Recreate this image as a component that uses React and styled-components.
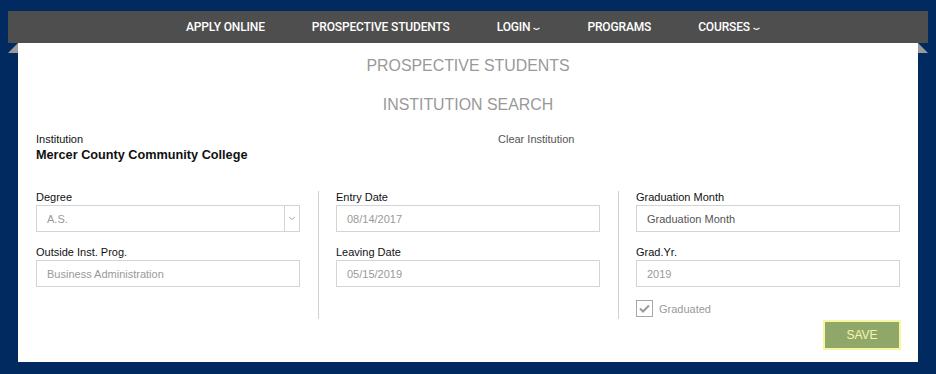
import React from 'react';
import styled, { createGlobalStyle } from 'styled-components';

const GlobalStyle = createGlobalStyle`
  html, body { margin: 0; padding: 0; background: #002a60; }
  body { font-family: 'Liberation Sans', Arial, sans-serif; }
`;

const Page = styled.div`
  width: 936px;
  height: 374px;
  padding: 11px 8px 0;
  box-sizing: border-box;
  background: #002a60;
`;

const Nav = styled.nav`
  position: relative;
  width: 920px;
  height: 32px;
  background: #4e4e4e;
  display: flex;
  justify-content: center;
  align-items: center;
  padding-left: 10px;
  box-sizing: border-box;

  &::before, &::after {
    content: '';
    position: absolute;
    top: 100%;
    width: 0; height: 0;
    border-style: solid;
  }
  &::before {
    left: 0;
    border-width: 10px 10px 0 0;
    border-color: transparent #9a9a9a transparent transparent;
  }
  &::after {
    right: 0;
    border-width: 10px 0 0 10px;
    border-color: transparent transparent transparent #9a9a9a;
  }
`;

const NavItem = styled.a`
  padding: 0 23.5px;
  color: #fff;
  font-family: Roboto, 'Liberation Sans', sans-serif;
  font-weight: 500;
  font-size: 12px;
  letter-spacing: -0.15px;
  text-decoration: none;
  display: flex;
  align-items: center;
  gap: 3px;
  white-space: nowrap;
`;

const Panel = styled.main`
  width: 900px;
  margin: 0 10px;
  background: #fff;
  padding: 12px 18px 12px;
  box-sizing: border-box;
`;

const Title = styled.h2`
  margin: 0 0 18px;
  text-align: center;
  font-weight: normal;
  font-size: 15.9px;
  line-height: 21px;
  color: #999;
`;

const InstRow = styled.div`
  display: flex;
  margin-top: 1px;
`;

const InstBlock = styled.div`
  width: 462px;
`;

const Label = styled.div`
  font-size: 11px;
  line-height: 13px;
  color: ${p => p.muted ? '#555' : '#111'};
  margin-bottom: 1px;
`;

const InstName = styled.div`
  font-weight: bold;
  font-size: 12.7px;
  line-height: 16px;
  color: #111;
`;

const Columns = styled.div`
  display: grid;
  grid-template-columns: 300px 300px 300px;
  margin: 28px -18px 0;
`;

const Column = styled.div`
  padding: 0 18px;
  height: 128px;
  border-left: ${p => p.divided ? '1px solid #d0d0d0' : 'none'};
  padding-left: ${p => p.divided ? '17px' : '18px'};
`;

const Field = styled.div`
  margin-bottom: 14px;
`;

const Box = styled.div`
  height: 27px;
  border: 1px solid #d4d4d4;
  box-sizing: border-box;
  display: flex;
  align-items: center;
  padding-left: 10px;
  font-size: 11px;
  color: ${p => p.dark ? '#555' : '#9a9a9a'};
`;

const SelectArrow = styled.div`
  margin-left: auto;
  width: 14px;
  height: 100%;
  border-left: 1px solid #d4d4d4;
  display: flex;
  align-items: center;
  justify-content: center;
`;

const CheckRow = styled.div`
  display: flex;
  align-items: center;
  gap: 6px;
  margin-top: -1px;
  font-size: 11px;
  color: #9a9a9a;
`;

const CheckBox = styled.div`
  width: 17px;
  height: 17px;
  border: 1px solid #a8a8a8;
  box-sizing: border-box;
  display: flex;
  align-items: center;
  justify-content: center;
`;

const Footer = styled.div`
  display: flex;
  justify-content: flex-end;
  margin: 1px -1px 0 0;
`;

const SaveButton = styled.button`
  width: 78px;
  height: 30px;
  background: #8fa86a;
  border: 2px solid #f6f7a0;
  color: #f6f6a8;
  font-family: 'Liberation Sans', Arial, sans-serif;
  font-size: 12px;
  padding: 0;
`;

const Chevron = ({ color = '#fff', w = 7, h = 4 }) => (
  <svg width={w} height={h} viewBox="0 0 7 4" style={{ marginTop: 3 }}>
    <path d="M0.5 0.8 Q3.5 4 6.5 0.8" fill="none" stroke={color} strokeWidth="1.2" />
  </svg>
);

const navItems = [
  { label: 'APPLY ONLINE' },
  { label: 'PROSPECTIVE STUDENTS' },
  { label: 'LOGIN', menu: true },
  { label: 'PROGRAMS' },
  { label: 'COURSES', menu: true },
];

const App = () => (
  <Page>
    <GlobalStyle />
    <Nav>
      {navItems.map(item => (
        <NavItem key={item.label}>
          {item.label}
          {item.menu && <Chevron />}
        </NavItem>
      ))}
    </Nav>
    <Panel>
      <Title>PROSPECTIVE STUDENTS</Title>
      <Title>INSTITUTION SEARCH</Title>
      <InstRow>
        <InstBlock>
          <Label>Institution</Label>
          <InstName>Mercer County Community College</InstName>
        </InstBlock>
        <Label muted>Clear Institution</Label>
      </InstRow>
      <Columns>
        <Column>
          <Field>
            <Label>Degree</Label>
            <Box>
              A.S.
              <SelectArrow>
                <svg width="8" height="5" viewBox="0 0 8 5">
                  <path d="M1 1 L4 3.5 L7 1" fill="none" stroke="#aaa" strokeWidth="1" />
                </svg>
              </SelectArrow>
            </Box>
          </Field>
          <Field>
            <Label>Outside Inst. Prog.</Label>
            <Box>Business Administration</Box>
          </Field>
        </Column>
        <Column divided>
          <Field>
            <Label>Entry Date</Label>
            <Box>08/14/2017</Box>
          </Field>
          <Field>
            <Label>Leaving Date</Label>
            <Box>05/15/2019</Box>
          </Field>
        </Column>
        <Column divided>
          <Field>
            <Label>Graduation Month</Label>
            <Box dark>Graduation Month</Box>
          </Field>
          <Field>
            <Label>Grad.Yr.</Label>
            <Box>2019</Box>
          </Field>
          <CheckRow>
            <CheckBox>
              <svg width="11" height="9" viewBox="0 0 11 9">
                <path d="M1 4.5 L4 7.5 L10 1.5" fill="none" stroke="#9a9a9a" strokeWidth="2" />
              </svg>
            </CheckBox>
            Graduated
          </CheckRow>
        </Column>
      </Columns>
      <Footer>
        <SaveButton>SAVE</SaveButton>
      </Footer>
    </Panel>
  </Page>
);

export default App;
